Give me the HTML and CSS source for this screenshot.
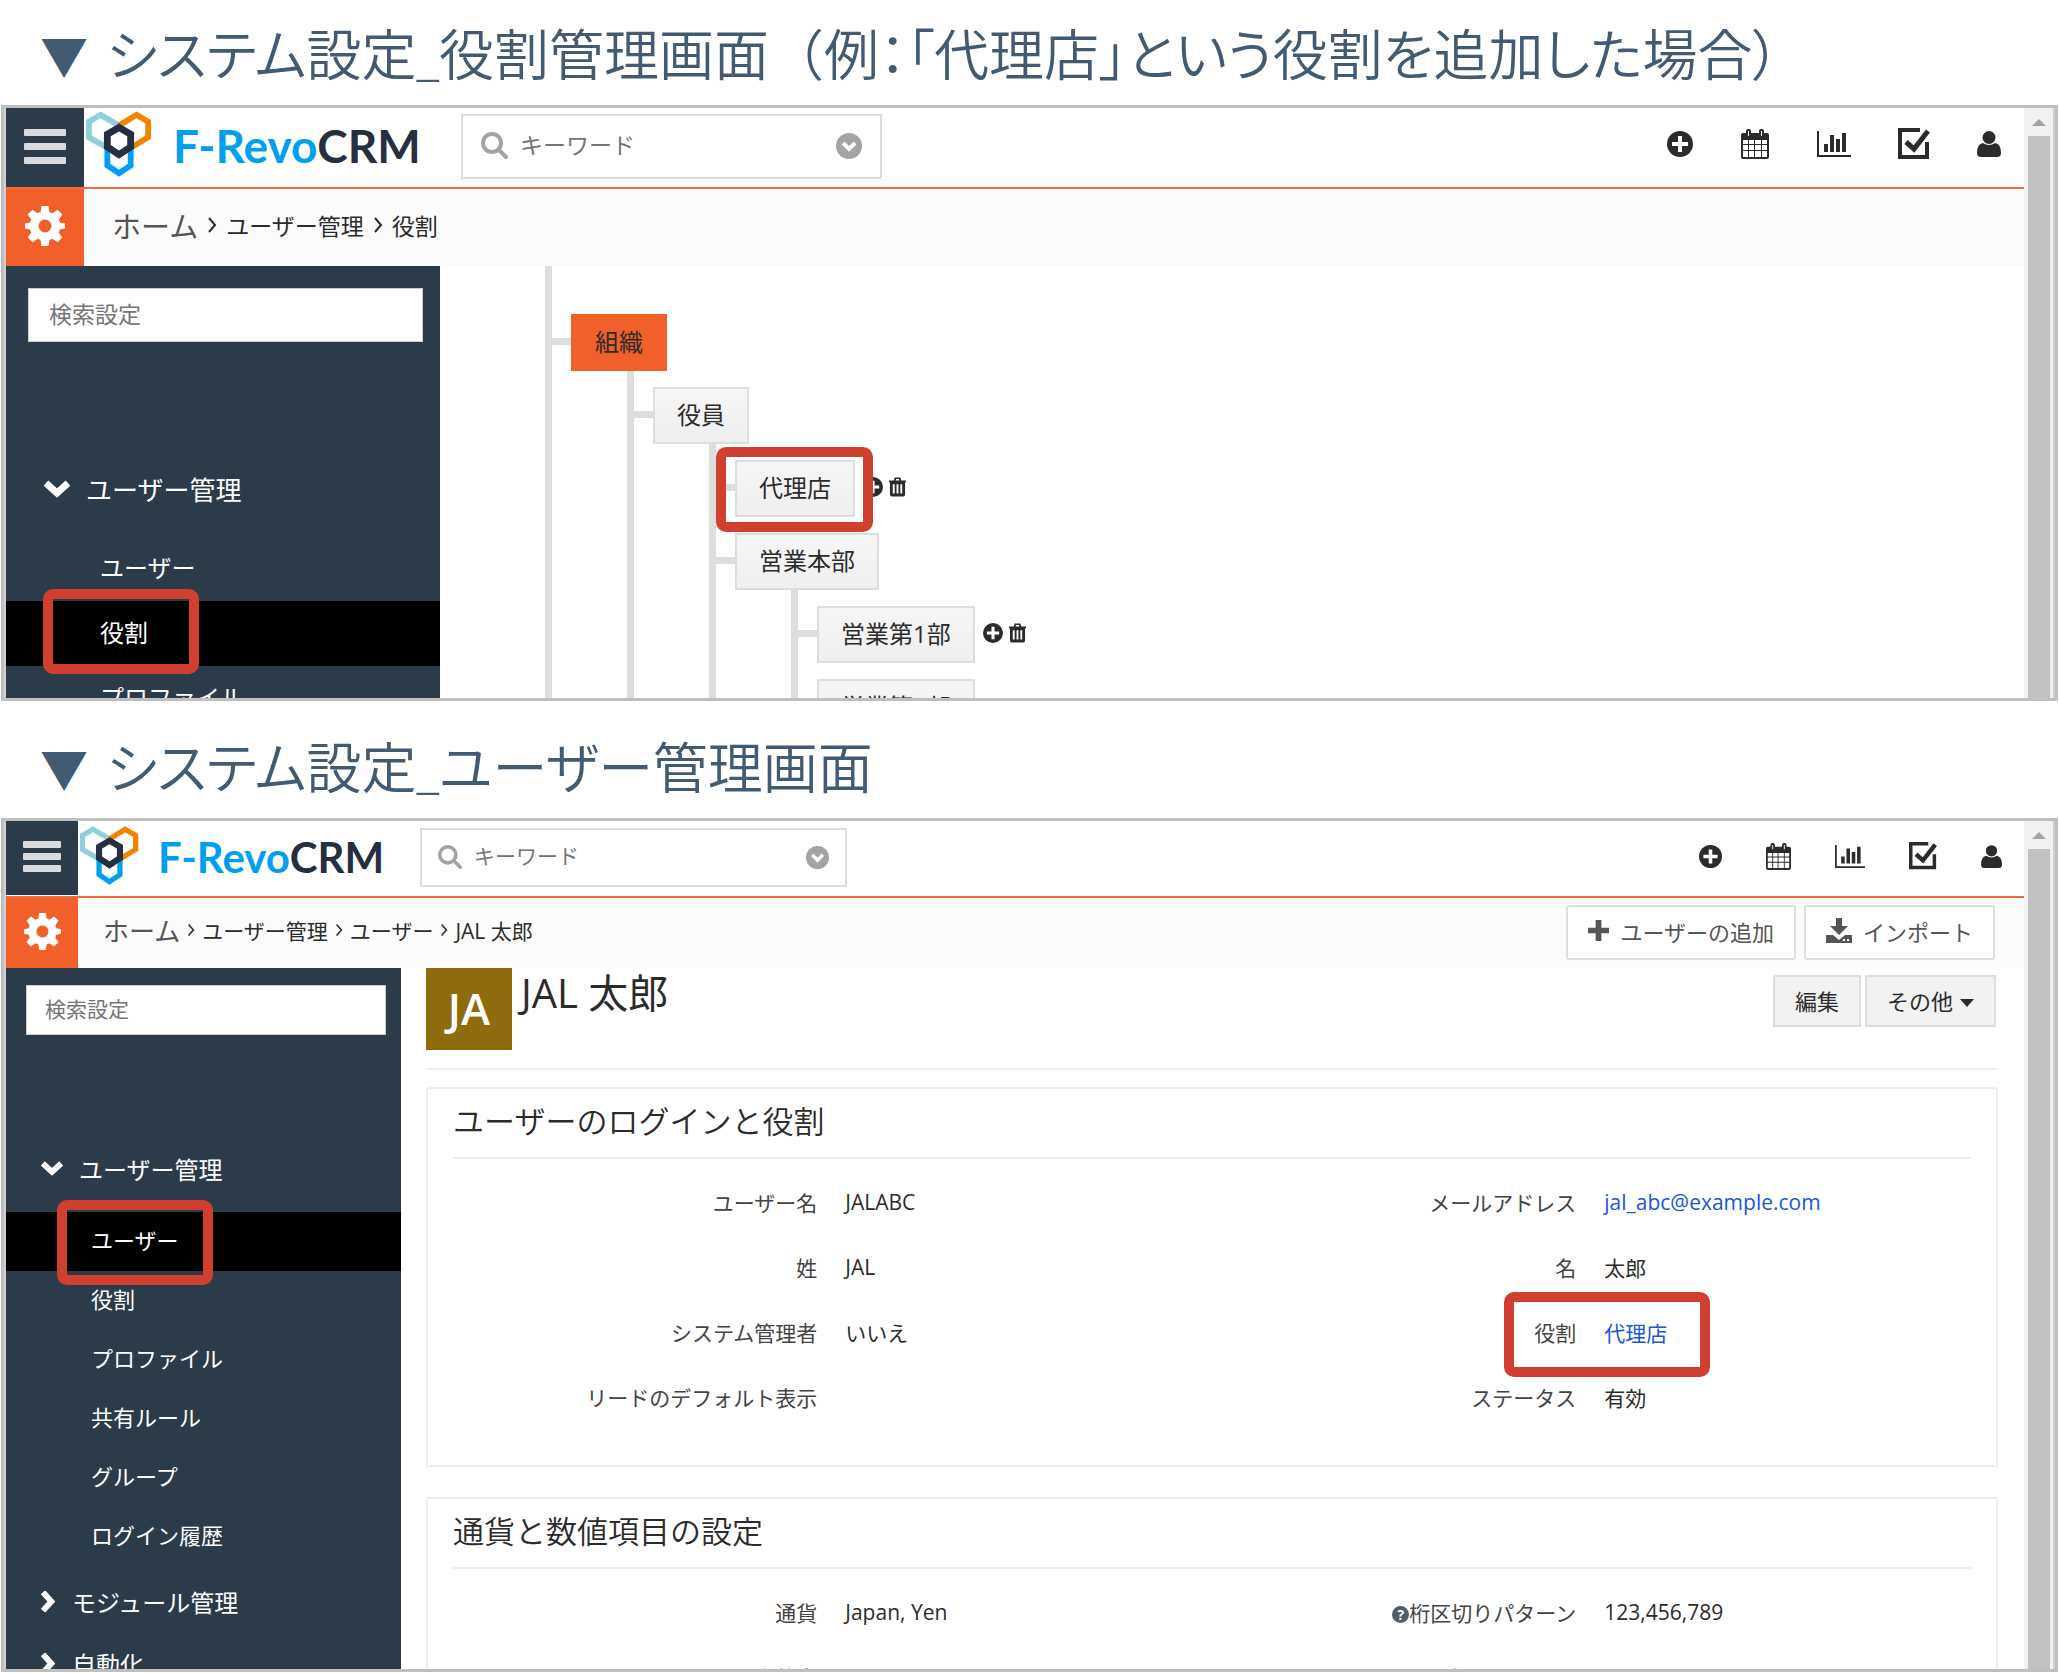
FILE: index.html
```html
<!DOCTYPE html>
<html lang="ja">
<head>
    <meta charset="UTF-8">
    <meta name="viewport" content="width=device-width, initial-scale=1.0">
    <title>システム設定 - F-RevoCRM</title>
    <link rel="stylesheet" href="styles.css">
</head>
<body>

<!-- Icone condivise -->
<svg class="sprite" aria-hidden="true">
    <symbol id="logo" viewBox="5 4 70 70">
        <g fill="none" stroke-width="6">
            <path stroke="#8fd0da" d="M40 20 21 9 9 16V32L28 43"/>
            <path stroke="#f08300" d="M40 20 58 9 70 16V32L52 43"/>
            <path stroke="#00a0ee" d="M28 40V61L40 69 52 61V40"/>
            <path stroke="#252f42" stroke-width="7" d="M40 22 52 29V42L40 50 28 42V29Z"/>
        </g>
    </symbol>
    <symbol id="search" viewBox="0 0 28 28">
        <circle cx="11" cy="11" r="9" fill="none" stroke="currentColor" stroke-width="4"/>
        <path d="M18 18l7 7" stroke="currentColor" stroke-width="4" stroke-linecap="round"/>
    </symbol>
    <symbol id="circle-down" viewBox="0 0 26 26">
        <circle cx="13" cy="13" r="13" fill="currentColor"/>
        <path d="M7 10l6 6 6-6" fill="none" stroke="#fff" stroke-width="4"/>
    </symbol>
    <symbol id="plus-circle" viewBox="0 0 26 26">
        <circle cx="13" cy="13" r="13" fill="currentColor"/>
        <path d="M13 5v16M5 13h16" stroke="#fff" stroke-width="4"/>
    </symbol>
    <symbol id="calendar" viewBox="0 0 28 30">
        <path fill="currentColor" fill-rule="evenodd" d="M2 4h3V2a2 2 0 0 1 2-2h1a2 2 0 0 1 2 2v2h8V2a2 2 0 0 1 2-2h1a2 2 0 0 1 2 2v2h3a2 2 0 0 1 2 2v22a2 2 0 0 1-2 2H2a2 2 0 0 1-2-2V6a2 2 0 0 1 2-2zM2 11v4h5v-4zm6 0v4h5v-4zm6 0v4h6v-4zm7 0v4h5v-4zM2 16v5h5v-5zm6 0v5h5v-5zm6 0v5h6v-5zm7 0v5h5v-5zM2 22v6h5v-6zm6 0v6h5v-6zm6 0v6h6v-6zm7 0v6h5v-6zM7 2v5h1V2zm13 0v5h1V2z"/>
    </symbol>
    <symbol id="chart" viewBox="0 0 34 26">
        <path fill="currentColor" d="M0 0h2v24h32v2H0zM7 13h4v8H7zM13 4h4v17h-4zM19 8h4v13h-4zM25 2h4v19h-4z"/>
    </symbol>
    <symbol id="check" viewBox="0 0 32 32">
        <path fill="none" stroke="currentColor" stroke-width="4" d="M22 2H2v27h27V14"/>
        <path fill="none" stroke="currentColor" stroke-width="5" d="M8 14l8 7L30 3"/>
    </symbol>
    <symbol id="user" viewBox="0 0 24 26">
        <path fill="currentColor" d="M12 0a6.500 6.500 0 0 1 0 13a6.500 6.500 0 0 1 0-13zM6 12q6 4 12 0q6 1 6 10q0 4-4 4H4q-4 0-4-4q0-9 6-10z"/>
    </symbol>
    <symbol id="gear" viewBox="0 0 40 40">
        <path fill="currentColor" fill-rule="evenodd" d="M16.500 0h7l1 6 3 1.200 5-3.500 4.800 4.800-3.500 5L35 16.500l5 1v5l-5 1-1.200 3 3.500 5-4.800 4.800-5-3.500-3 1.200-1 6h-7l-1-6-3-1.200-5 3.500-4.800-4.800 3.500-5L5 23.500l-5-1v-5l5-1 1.200-3-3.500-5 4.800-4.800 5 3.500 3-1.200zM20 13.500a6.500 6.500 0 0 0 0 13a6.500 6.500 0 0 0 0-13z"/>
    </symbol>
    <symbol id="chevron" viewBox="0 0 26 18">
        <path fill="none" stroke="currentColor" stroke-width="7" d="M2 3l11 10L24 3"/>
    </symbol>
    <symbol id="angle" viewBox="0 0 10 16">
        <path fill="none" stroke="currentColor" stroke-width="2" d="M2 1l6 7-6 7"/>
    </symbol>
    <symbol id="trash" viewBox="0 0 18 20">
        <path fill="currentColor" fill-rule="evenodd" d="M0 3h5l1-3h6l1 3h5v2h-1v13q0 2-2 2H3q-2 0-2-2V5H0zM7 3h4l-.5-1.500h-3zM4 7v10h2V7zm4 0v10h2V7zm4 0v10h2V7z"/>
    </symbol>
    <symbol id="plus" viewBox="0 0 22 22">
        <path stroke="currentColor" stroke-width="6" d="M11 0v22M0 11h22"/>
    </symbol>
    <symbol id="download" viewBox="0 0 26 26">
        <path fill="currentColor" fill-rule="evenodd" d="M10 0h6v8h6l-9 9-9-9h6zM0 17h7l6 5 6-5h7v8H0zM17 21v2h2v-2zm4 0v2h2v-2z"/>
    </symbol>
</svg>

<!-- Schermata gestione ruoli -->
<h1 class="title"><span class="mark">▼</span> システム設定_役割管理画面<span class="wide">（</span>例：「代理店」という役割を追加した場合）</h1>
<section class="screen screen-roles">
    <div class="app">
        <header class="topbar">
            <button class="menu-button" aria-label="メニュー"><span></span><span></span><span></span></button>
            <a href="#" class="brand">
                <svg class="brand-mark"><use href="#logo"/></svg>
                <span class="brand-name">F-Revo<b>CRM</b></span>
            </a>
            <div class="keyword">
                <svg class="keyword-icon"><use href="#search"/></svg>
                <input type="text" placeholder="キーワード" aria-label="キーワード">
                <svg class="keyword-more"><use href="#circle-down"/></svg>
            </div>
            <nav class="tools">
                <a href="#" aria-label="追加"><svg class="tool-plus"><use href="#plus-circle"/></svg></a>
                <a href="#" aria-label="カレンダー"><svg class="tool-calendar"><use href="#calendar"/></svg></a>
                <a href="#" aria-label="レポート"><svg class="tool-chart"><use href="#chart"/></svg></a>
                <a href="#" aria-label="タスク"><svg class="tool-check"><use href="#check"/></svg></a>
                <a href="#" aria-label="アカウント"><svg class="tool-user"><use href="#user"/></svg></a>
            </nav>
        </header>
        <div class="subbar">
            <a href="#" class="gear" aria-label="設定"><svg><use href="#gear"/></svg></a>
            <nav class="breadcrumb">
                <a href="#" class="home">ホーム</a>
                <svg class="sep"><use href="#angle"/></svg>
                <span>ユーザー管理</span>
                <svg class="sep"><use href="#angle"/></svg>
                <span>役割</span>
            </nav>
        </div>
        <div class="content">
            <aside class="sidebar">
                <input type="text" class="side-search" placeholder="検索設定" aria-label="検索設定">
                <a href="#" class="side-group open"><svg><use href="#chevron"/></svg>ユーザー管理</a>
                <ul class="side-list">
                    <li><a href="#">ユーザー</a></li>
                    <li class="active"><a href="#">役割</a><i class="callout callout-menu"></i></li>
                    <li><a href="#">プロファイル</a></li>
                </ul>
            </aside>
            <main class="tree">
                <ul>
                    <li>
                        <div class="node"><button class="root">組織</button></div>
                        <ul>
                            <li>
                                <div class="node"><button>役員</button></div>
                                <ul>
                                    <li>
                                        <div class="node">
                                            <button>代理店</button>
                                            <svg class="node-add"><use href="#plus-circle"/></svg>
                                            <svg class="node-delete"><use href="#trash"/></svg>
                                            <i class="callout callout-node"></i>
                                        </div>
                                    </li>
                                    <li>
                                        <div class="node"><button>営業本部</button></div>
                                        <ul>
                                            <li>
                                                <div class="node">
                                                    <button>営業第1部</button>
                                                    <svg class="node-add"><use href="#plus-circle"/></svg>
                                                    <svg class="node-delete"><use href="#trash"/></svg>
                                                </div>
                                            </li>
                                            <li>
                                                <div class="node"><button>営業第2部</button></div>
                                            </li>
                                        </ul>
                                    </li>
                                </ul>
                            </li>
                        </ul>
                    </li>
                </ul>
            </main>
        </div>
    </div>
    <div class="scrollbar"><span class="arrow"></span><span class="thumb"></span></div>
</section>

<!-- Schermata gestione utenti -->
<h1 class="title"><span class="mark">▼</span> システム設定_ユーザー管理画面</h1>
<section class="screen screen-users">
    <div class="app">
        <header class="topbar">
            <button class="menu-button" aria-label="メニュー"><span></span><span></span><span></span></button>
            <a href="#" class="brand">
                <svg class="brand-mark"><use href="#logo"/></svg>
                <span class="brand-name">F-Revo<b>CRM</b></span>
            </a>
            <div class="keyword">
                <svg class="keyword-icon"><use href="#search"/></svg>
                <input type="text" placeholder="キーワード" aria-label="キーワード">
                <svg class="keyword-more"><use href="#circle-down"/></svg>
            </div>
            <nav class="tools">
                <a href="#" aria-label="追加"><svg class="tool-plus"><use href="#plus-circle"/></svg></a>
                <a href="#" aria-label="カレンダー"><svg class="tool-calendar"><use href="#calendar"/></svg></a>
                <a href="#" aria-label="レポート"><svg class="tool-chart"><use href="#chart"/></svg></a>
                <a href="#" aria-label="タスク"><svg class="tool-check"><use href="#check"/></svg></a>
                <a href="#" aria-label="アカウント"><svg class="tool-user"><use href="#user"/></svg></a>
            </nav>
        </header>
        <div class="subbar">
            <a href="#" class="gear" aria-label="設定"><svg><use href="#gear"/></svg></a>
            <nav class="breadcrumb">
                <a href="#" class="home">ホーム</a>
                <svg class="sep"><use href="#angle"/></svg>
                <span>ユーザー管理</span>
                <svg class="sep"><use href="#angle"/></svg>
                <span>ユーザー</span>
                <svg class="sep"><use href="#angle"/></svg>
                <span>JAL 太郎</span>
            </nav>
            <div class="actions">
                <button><svg class="icon-plus"><use href="#plus"/></svg>ユーザーの追加</button>
                <button><svg class="icon-download"><use href="#download"/></svg>インポート</button>
            </div>
        </div>
        <div class="content">
            <aside class="sidebar">
                <input type="text" class="side-search" placeholder="検索設定" aria-label="検索設定">
                <a href="#" class="side-group open"><svg><use href="#chevron"/></svg>ユーザー管理</a>
                <ul class="side-list">
                    <li class="active"><a href="#">ユーザー</a><i class="callout callout-menu"></i></li>
                    <li><a href="#">役割</a></li>
                    <li><a href="#">プロファイル</a></li>
                    <li><a href="#">共有ルール</a></li>
                    <li><a href="#">グループ</a></li>
                    <li><a href="#">ログイン履歴</a></li>
                </ul>
                <a href="#" class="side-group"><svg><use href="#chevron"/></svg>モジュール管理</a>
                <a href="#" class="side-group"><svg><use href="#chevron"/></svg>自動化</a>
            </aside>
            <main class="detail">
                <div class="profile">
                    <div class="avatar">JA</div>
                    <h2>JAL 太郎</h2>
                    <div class="profile-buttons">
                        <button>編集</button>
                        <button>その他<span class="caret"></span></button>
                    </div>
                </div>
                <section class="card">
                    <h3>ユーザーのログインと役割</h3>
                    <table>
                        <tr>
                            <th>ユーザー名</th><td>JALABC</td>
                            <th>メールアドレス</th><td><a href="#">jal_abc@example.com</a></td>
                        </tr>
                        <tr>
                            <th>姓</th><td>JAL</td>
                            <th>名</th><td>太郎</td>
                        </tr>
                        <tr>
                            <th>システム管理者</th><td>いいえ</td>
                            <th>役割</th><td><a href="#">代理店</a><i class="callout callout-field"></i></td>
                        </tr>
                        <tr>
                            <th>リードのデフォルト表示</th><td></td>
                            <th>ステータス</th><td>有効</td>
                        </tr>
                    </table>
                </section>
                <section class="card">
                    <h3>通貨と数値項目の設定</h3>
                    <table>
                        <tr>
                            <th>通貨</th><td>Japan, Yen</td>
                            <th><span class="help">?</span>桁区切りパターン</th><td>123,456,789</td>
                        </tr>
                        <tr>
                            <th><span class="help">?</span>小数点</th><td></td>
                            <th><span class="help">?</span>桁区切り記号</th><td></td>
                        </tr>
                    </table>
                </section>
            </main>
        </div>
    </div>
    <div class="scrollbar"><span class="arrow"></span><span class="thumb"></span></div>
</section>

</body>
</html>
```
FILE: styles.css
```css
* {
    box-sizing: border-box;
}
body {
    display: grid;
    grid-template-rows: auto 596fr auto 854fr;
    height: 100vh;
    margin: 0;
    padding: 0 1px 1px;
    background-color: #fff;
    color: #2b2b2b;
    font-family: "Open Sans", "Noto Sans CJK JP", sans-serif;
}
button, input {
    font-family: inherit;
    font-size: inherit;
    color: inherit;
}
a {
    color: inherit;
    text-decoration: none;
}
ul {
    list-style: none;
    margin: 0;
    padding: 0;
}
svg {
    display: block;
    flex: none;
}
.sprite {
    position: absolute;
    width: 0;
    height: 0;
}
.title {
    margin: 0;
    padding: 14px 0 11px 39px;
    font-size: 55px;
    font-weight: 350;
    line-height: 80px;
    font-feature-settings: "palt";
    white-space: nowrap;
    color: #425b73;
}
.title .mark {
    margin-right: 4px;
    font-size: 48px;
    line-height: 1;
}
.title .wide {
    font-feature-settings: normal;
}
.screen + .title {
    margin-top: 12px;
}

/* Cornice della schermata */
.screen {
    display: grid;
    grid-template-columns: minmax(0, 1fr) 29px;
    min-height: 0;
    border: 3px solid #bfbfbf;
    padding: 0 2px;
    background-color: #d0d0d0;
    overflow: hidden;
}
.screen-roles {
    --top: 81px;
    --sub: 77px;
    --square: 78px;
    --side: 434px;
    --row: 65px;
    --group: 26px;
    --item: 24px;
    --crumb: 23px;
    --home: 29px;
}
.screen-users {
    --top: 77px;
    --sub: 70px;
    --square: 72px;
    --side: 395px;
    --row: 59px;
    --group: 24px;
    --item: 22px;
    --crumb: 21px;
    --home: 26px;
}
.app {
    display: flex;
    flex-direction: column;
    min-height: 0;
    background-color: #fff;
}

/* Barra superiore */
.topbar {
    display: flex;
    align-items: center;
    flex: none;
    height: var(--top);
    border-bottom: 2px solid #f2693a;
}
.menu-button {
    display: flex;
    flex-direction: column;
    justify-content: center;
    align-items: center;
    gap: 7px;
    width: var(--square);
    height: 100%;
    padding: 0 0 3px;
    border: none;
    background-color: #2c3b49;
}
.menu-button span {
    width: 42px;
    height: 7px;
    border-radius: 1px;
    background-color: #d8dadd;
}
.brand {
    display: flex;
    align-items: center;
    margin-bottom: 3px;
}
.brand-mark {
    width: 68px;
    height: 68px;
    margin: 0 20px 4px 1px;
}
.brand-name {
    width: 252px;
    font-family: Lato, sans-serif;
    font-size: 46px;
    font-weight: 700;
    line-height: 44px;
    color: #00a0ee;
}
.brand-name b {
    font-weight: 700;
    color: #252f42;
}
.keyword {
    display: flex;
    align-items: center;
    width: 421px;
    height: 65px;
    margin: 0 0 3px 36px;
    padding: 0 18px;
    border: 2px solid #ddd;
    color: #a3a3a3;
}
.keyword input {
    flex: 1;
    min-width: 0;
    padding: 0 0 2px;
    border: none;
    margin-left: 11px;
    font-size: var(--crumb);
}
.keyword input::placeholder {
    color: #757575;
}
.keyword-icon {
    width: 28px;
    height: 28px;
}
.keyword-more {
    width: 26px;
    height: 26px;
}
.tools {
    display: flex;
    align-items: center;
    margin-left: auto;
    margin-right: 23px;
    margin-bottom: 7px;
    color: #2b2b2b;
}
.tool-plus {
    width: 26px;
    height: 26px;
}
.tool-calendar {
    width: 28px;
    height: 30px;
    margin-left: 48px;
}
.tool-chart {
    width: 34px;
    height: 26px;
    margin-left: 48px;
}
.tool-check {
    width: 32px;
    height: 32px;
    margin-left: 47px;
}
.tool-user {
    width: 24px;
    height: 26px;
    margin-left: 47px;
}
.screen-users .menu-button {
    height: 74px;
    align-self: flex-start;
    gap: 5px;
}
.screen-users .menu-button span {
    width: 38px;
}
.screen-users .brand-mark {
    width: 61px;
    height: 61px;
    margin-right: 18px;
}
.screen-users .brand-name {
    width: 232px;
    font-size: 42px;
}
.screen-users .keyword {
    width: 427px;
    height: 59px;
    margin-left: 30px;
    padding: 0 16px;
}
.screen-users .keyword-icon {
    width: 25px;
    height: 25px;
}
.screen-users .keyword-more {
    width: 23px;
    height: 23px;
}
.screen-users .tools {
    margin-right: 22px;
    margin-bottom: 5px;
}
.screen-users .tool-plus {
    width: 23px;
    height: 23px;
}
.screen-users .tool-calendar {
    width: 25px;
    height: 27px;
    margin-left: 44px;
}
.screen-users .tool-chart {
    width: 30px;
    height: 23px;
    margin-left: 44px;
}
.screen-users .tool-check {
    width: 28px;
    height: 28px;
    margin-left: 44px;
}
.screen-users .tool-user {
    width: 21px;
    height: 23px;
    margin-left: 44px;
}

/* Percorso */
.subbar {
    display: flex;
    align-items: center;
    flex: none;
    height: var(--sub);
    background-color: #fbfbfb;
}
.gear {
    display: flex;
    align-items: center;
    justify-content: center;
    width: var(--square);
    height: 100%;
    padding-bottom: 4px;
    background-color: #f15f2a;
    color: #fff;
}
.gear svg {
    width: 40px;
    height: 40px;
}
.breadcrumb {
    display: flex;
    align-items: center;
    gap: 9px;
    margin-left: 28px;
    padding-bottom: 6px;
    font-size: var(--crumb);
    white-space: nowrap;
}
.home {
    font-size: var(--home);
    color: #555;
}
.sep {
    width: 10px;
    height: 16px;
}
.actions {
    display: flex;
    gap: 8px;
    margin-left: auto;
    margin-right: 29px;
    margin-bottom: 2px;
}
.actions button {
    display: flex;
    align-items: center;
    gap: 11px;
    height: 55px;
    padding: 0 20px 3px;
    border: 2px solid #ddd;
    border-radius: 3px;
    background-color: #fff;
    font-size: 22px;
    color: #555;
}
.icon-plus {
    width: 21px;
    height: 21px;
}
.icon-download {
    width: 26px;
    height: 26px;
}
.screen-users .gear svg {
    width: 37px;
    height: 37px;
}
.screen-users .breadcrumb {
    gap: 7px;
    margin-left: 25px;
}
.screen-users .sep {
    width: 8px;
    height: 14px;
}
.content {
    display: flex;
    flex: 1;
    min-height: 0;
    overflow: hidden;
}

/* Menu laterale */
.sidebar {
    flex: none;
    width: var(--side);
    background-color: #2c3b49;
    color: #fff;
}
.side-search {
    display: block;
    width: 395px;
    height: 54px;
    margin: 22px 0 116px 22px;
    padding: 0 20px 2px;
    border: 1px solid #ccc;
    background-color: #fff;
    font-size: var(--crumb);
}
.side-search::placeholder {
    color: #757575;
}
.side-group {
    display: flex;
    align-items: center;
    gap: 16px;
    height: 62px;
    padding-left: 38px;
    font-size: var(--group);
}
.side-group svg {
    width: 26px;
    height: 18px;
}
.side-group:not(.open) svg {
    width: 22px;
    height: 15px;
    transform: rotate(-90deg);
}
.screen-roles .side-list {
    padding-top: 16px;
}
.side-list li {
    position: relative;
    height: var(--row);
    padding-left: 94px;
    font-size: var(--item);
    line-height: calc(var(--row) - 2px);
}
.side-list .active {
    background-color: #000;
}
.screen-users .side-search {
    width: 360px;
    height: 50px;
    margin: 17px 0 102px 20px;
    padding: 0 18px 2px;
}
.screen-users .side-group {
    padding-left: 35px;
}
.screen-users .side-group svg {
    width: 22px;
    height: 15px;
}
.screen-users .side-group:not(.open) {
    padding-left: 31px;
    gap: 13px;
}
.screen-users .side-list {
    padding: 13px 0 4px;
}
.screen-users .side-list li {
    padding-left: 85px;
}

/* Riquadri rossi di evidenza */
.callout {
    position: absolute;
    z-index: 2;
    border: 10px solid #d04030;
    border-radius: 10px;
    pointer-events: none;
}
.callout-menu {
    top: -12px;
    left: 37px;
    width: 156px;
    height: 85px;
}
.screen-users .callout-menu {
    left: 51px;
}
.callout-node {
    top: -13px;
    left: -19px;
    width: 157px;
    height: 85px;
}
.callout-field {
    top: -7px;
    left: -72px;
    width: 206px;
    height: 85px;
}

/* Albero dei ruoli */
.tree > ul {
    margin-left: 105px;
    padding-top: 32px;
    min-height: 100%;
}
.tree ul {
    border-left: 7px solid #ddd;
}
.tree ul ul {
    margin-left: 56px;
}
.tree li {
    padding-left: 19px;
}
.node {
    position: relative;
    top: 16px;
    display: flex;
    align-items: center;
    height: 57px;
    margin-bottom: 16px;
}
.node::before {
    content: "";
    position: absolute;
    left: -19px;
    top: 24px;
    width: 19px;
    height: 7px;
    background-color: #ddd;
}
.node button {
    height: 57px;
    padding: 0 22px 4px;
    border: 2px solid #ddd;
    background: linear-gradient(#f6f6f6, #efefef);
    font-size: 24px;
    white-space: nowrap;
}
.node .root {
    border-color: #f15f2a;
    background: #f15f2a;
}
.node-add {
    width: 20px;
    height: 20px;
    margin: 0 0 3px 8px;
}
.node-delete {
    width: 17px;
    height: 20px;
    margin: 0 0 3px 6px;
}

/* Dettaglio utente */
.detail {
    flex: 1;
    min-width: 0;
    padding: 0 26px 0 25px;
}
.profile {
    display: flex;
    align-items: flex-start;
    height: 102px;
    margin-bottom: 17px;
    border-bottom: 2px solid #eee;
}
.avatar {
    width: 86px;
    height: 82px;
    background-color: #8e6b0c;
    color: #fff;
    font-size: 44px;
    font-weight: 600;
    line-height: 80px;
    text-align: center;
}
.profile h2 {
    margin: 0;
    padding-left: 9px;
    font-size: 40px;
    font-weight: 400;
    line-height: 50px;
}
.profile-buttons {
    display: flex;
    gap: 4px;
    margin: 7px 2px 0 auto;
}
.profile-buttons button {
    display: flex;
    align-items: center;
    height: 52px;
    padding: 0 20px 3px;
    border: 2px solid #ddd;
    background-color: #f2f2f2;
    font-size: 22px;
}
.caret {
    margin: 7px 0 0 7px;
    border: 7px solid transparent;
    border-top: 8px solid #2b2b2b;
    border-bottom: none;
}
.card {
    margin-bottom: 30px;
    padding: 0 25px 36px;
    border: 2px solid #eee;
}
.card h3 {
    height: 70px;
    margin: 0 0 10px;
    border-bottom: 2px solid #eee;
    font-size: 31px;
    font-weight: 350;
    line-height: 65px;
}
.card table {
    width: 100%;
    table-layout: fixed;
    border-collapse: collapse;
    font-size: 21px;
}
.card tr {
    height: 65px;
}
.card th {
    width: 24%;
    padding: 0;
    font-weight: 400;
    text-align: right;
    color: #444;
}
.card td {
    position: relative;
    width: 26%;
    padding: 0 0 0 28px;
}
.card td a {
    color: #1a56d6;
}
.help {
    display: inline-block;
    width: 17px;
    height: 17px;
    border-radius: 50%;
    background-color: #4e5d6b;
    color: #fff;
    font-size: 14px;
    font-weight: 700;
    line-height: 17px;
    text-align: center;
    vertical-align: 1px;
}

/* Barra di scorrimento */
.scrollbar {
    display: flex;
    flex-direction: column;
    align-items: center;
    background-color: #f1f1f1;
}
.arrow {
    margin: 11px 0 10px;
    border: 7px solid transparent;
    border-top: none;
    border-bottom: 7px solid #a3a3a3;
}
.thumb {
    flex: 1;
    width: 22px;
    background-color: #c1c1c1;
}
```
